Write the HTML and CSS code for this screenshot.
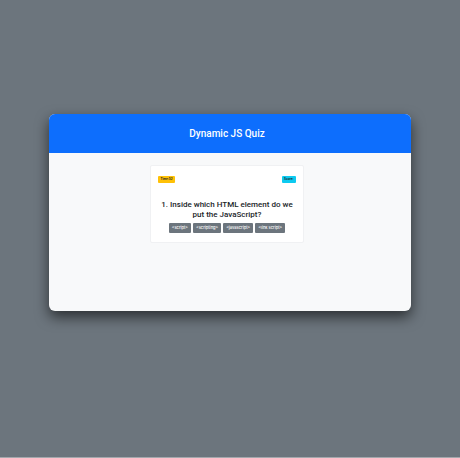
FILE: index.html
```
<!DOCTYPE html>
<html lang="en">
<head>
<meta charset="utf-8">
<meta name="viewport" content="width=device-width, initial-scale=1">
<title>Dynamic JS Quiz</title>
<link rel="stylesheet" href="styles.css">
</head>
<body>
<main class="panel">
  <header class="panel-header"><h1>Dynamic JS Quiz</h1></header>
  <div class="panel-body">
    <section class="quiz">
      <div class="status">
        <span class="badge badge-time">Time:52</span>
        <span class="badge badge-score">Score:</span>
      </div>
      <h2 class="question">1. Inside which HTML element do we put the JavaScript?</h2>
      <div class="answers">
        <button type="button">&lt;script&gt;</button>
        <button type="button">&lt;scripting&gt;</button>
        <button type="button">&lt;javascript&gt;</button>
        <button type="button">&lt;link script&gt;</button>
      </div>
    </section>
  </div>
</main>
</body>
</html>
```
FILE: styles.css
```
* {
  box-sizing: border-box;
}

body {
  margin: 0;
  min-height: 100vh;
  padding: 114px 49px 0;
  background: #6c757d;
  border-bottom: 1px solid #a3a8ad;
  font-family: Roboto, "Liberation Sans", sans-serif;
  color: #212529;
}

.panel {
  min-height: 43vh;
  border-radius: 6px;
  background: #f8f9fa;
  box-shadow: 0 6px 14px rgba(0, 0, 0, 0.6);
}

.panel-header {
  padding: 13px 6px 12px 0;
  border-radius: 6px 6px 0 0;
  background: #0d6efd;
  color: #fff;
  text-align: center;
}

.panel-header h1 {
  margin: 0;
  font-size: 10px;
  line-height: 14px;
  font-weight: 500;
}

.panel-body {
  padding: 12px 6px 12px 0;
}

.quiz {
  width: 43%;
  margin: 0 auto;
  padding: 10px 7px 9px;
  border: 1px solid #f0f1f3;
  border-radius: 2px;
  background: #fff;
}

.status {
  display: flex;
  justify-content: space-between;
  margin-bottom: 17px;
}

.badge {
  padding: 0 2px;
  border-radius: 1px;
  font-family: Inter, "Liberation Sans", sans-serif;
  font-size: 3px;
  line-height: 7px;
  font-weight: 700;
}

.badge-time {
  background: #ffc107;
}

.badge-score {
  background: #0dcaf0;
}

.question {
  margin: 0 0 3px;
  font-size: 8px;
  line-height: 10px;
  font-weight: 500;
  text-align: center;
}

.answers {
  display: flex;
  justify-content: center;
  gap: 2px;
}

.answers button {
  padding: 0 3px;
  border: 0;
  border-radius: 1px;
  background: #6c757d;
  color: #fff;
  font: 500 4px/10px Inter, "Liberation Sans", sans-serif;
}
```
